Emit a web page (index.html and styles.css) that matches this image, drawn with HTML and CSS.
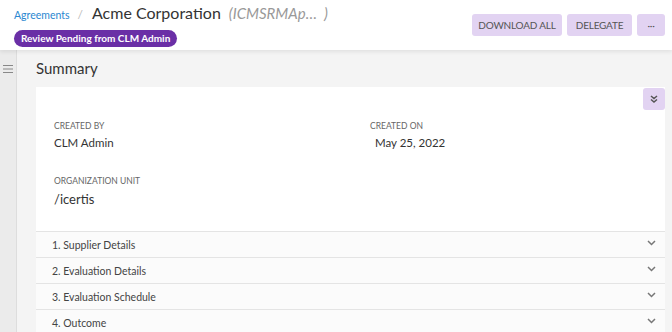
FILE: index.html
```html
<!DOCTYPE html>
<html lang="en">
<head>
  <meta charset="UTF-8">
  <title>Acme Corporation</title>
  <link rel="stylesheet" href="styles.css">
</head>
<body>

<div class="header">
  <div class="title-block">
    <div class="crumbs">
      <a class="crumb-link">Agreements</a>
      <span class="sep">/</span>
      <span class="name">Acme Corporation</span>
      <span class="code">(ICMSRMAp…&nbsp; )</span>
    </div>
    <span class="badge">Review Pending from CLM Admin</span>
  </div>
  <div class="actions">
    <button class="btn wide">DOWNLOAD ALL</button>
    <button class="btn mid">DELEGATE</button>
    <button class="btn more">···</button>
  </div>
</div>

<div class="main">
  <div class="sidebar">
    <svg class="burger" width="10" height="8" viewBox="0 0 10 8"><path d="M0 .5h10M0 4h10M0 7.5h10" stroke="#888" stroke-width="1"/></svg>
  </div>
  <div class="content">
    <h2>Summary</h2>
    <div class="card">
      <button class="collapse">
        <svg width="10" height="10" viewBox="0 0 10 10"><path d="M2 2l3 2.5L8 2M2 5.5l3 2.5 3-2.5" fill="none" stroke="#555" stroke-width="1.5"/></svg>
      </button>
      <div class="fields">
        <div class="field">
          <div class="label">CREATED BY</div>
          <div class="value">CLM Admin</div>
        </div>
        <div class="field">
          <div class="label">CREATED ON</div>
          <div class="value date">May 25, 2022</div>
        </div>
        <div class="field">
          <div class="label">ORGANIZATION UNIT</div>
          <div class="value big">/icertis</div>
        </div>
      </div>
      <div class="sections">
        <div class="row"><span>1. Supplier Details</span><svg class="chev" width="9" height="6" viewBox="0 0 9 6"><path d="M1 1l3.5 3.5L8 1" fill="none" stroke="#777" stroke-width="1.5"/></svg></div>
        <div class="row"><span>2. Evaluation Details</span><svg class="chev" width="9" height="6" viewBox="0 0 9 6"><path d="M1 1l3.5 3.5L8 1" fill="none" stroke="#777" stroke-width="1.5"/></svg></div>
        <div class="row"><span>3. Evaluation Schedule</span><svg class="chev" width="9" height="6" viewBox="0 0 9 6"><path d="M1 1l3.5 3.5L8 1" fill="none" stroke="#777" stroke-width="1.5"/></svg></div>
        <div class="row"><span>4. Outcome</span><svg class="chev" width="9" height="6" viewBox="0 0 9 6"><path d="M1 1l3.5 3.5L8 1" fill="none" stroke="#777" stroke-width="1.5"/></svg></div>
      </div>
    </div>
  </div>
</div>

</body>
</html>
```

FILE: styles.css
```css
body {
  margin: 0;
  font-family: Lato, "Open Sans", sans-serif;
  color: #333;
  background: #f4f4f4;
  overflow: hidden;
}
.header {
  background: #fff;
  height: 50px;
  display: flex;
  justify-content: space-between;
  align-items: flex-start;
  padding: 0 7px 0 14px;
  box-shadow: 0 2px 4px rgba(0,0,0,0.08);
  position: relative;
  z-index: 1;
}
.title-block {
  padding-top: 3px;
}
.crumbs {
  display: flex;
  align-items: baseline;
  height: 23px;
}
.crumb-link {
  color: #2a87d0;
  font-size: 10.5px;
}
.sep {
  color: #bbb;
  font-size: 12px;
  margin: 0 9px 0 8px;
}
.name {
  font-size: 16px;
  color: #333;
}
.code {
  font-size: 15px;
  font-style: italic;
  color: #999;
  margin-left: 8px;
}
.badge {
  display: inline-block;
  background: #6a2fa6;
  color: #fff;
  font-size: 10px;
  font-weight: bold;
  padding: 2px 7px 3px;
  border-radius: 9px;
}
.actions {
  display: flex;
  gap: 5px;
  padding-top: 14px;
}
.btn {
  background: #e2d3f2;
  border: none;
  border-radius: 3px;
  height: 22px;
  padding: 0;
  font-family: inherit;
  font-size: 10px;
  letter-spacing: -0.2px;
  color: #555;
}
.btn.wide {
  width: 90px;
}
.btn.mid {
  width: 65px;
}
.btn.more {
  width: 28px;
}
.main {
  display: flex;
  height: 282px;
}
.sidebar {
  width: 16px;
  background: #ebebeb;
  border-right: 1px solid #ddd;
  display: flex;
  justify-content: center;
  align-items: flex-start;
}
.burger {
  margin-top: 15px;
}
.content {
  flex: 1;
  padding: 0 7px 0 19px;
}
h2 {
  font-weight: normal;
  font-size: 15px;
  margin: 0;
  height: 37px;
  line-height: 36px;
  color: #333;
}
.card {
  background: #fff;
  position: relative;
  height: 250px;
}
.collapse {
  position: absolute;
  top: 1px;
  right: 0;
  width: 22px;
  height: 22px;
  border: none;
  border-radius: 3px;
  background: #e2d3f2;
  padding: 0;
  display: flex;
  align-items: center;
  justify-content: center;
}
.fields {
  display: grid;
  grid-template-columns: 316px 1fr;
  grid-template-rows: 55px 55px;
  padding: 34px 18px 0;
  height: 110px;
}
.label {
  font-size: 8.5px;
  color: #666;
  margin-bottom: 5px;
}
.value {
  font-size: 11.5px;
  color: #333;
}
.value.date {
  padding-left: 5px;
}
.value.big {
  font-size: 13px;
}
.row {
  height: 25px;
  border-top: 1px solid #e4e4e4;
  background: #fbfbfb;
  display: flex;
  align-items: center;
  justify-content: space-between;
  padding: 0 9px 0 16px;
  font-size: 10.5px;
  color: #444;
}
.chev {
  margin-top: -4px;
}
```
